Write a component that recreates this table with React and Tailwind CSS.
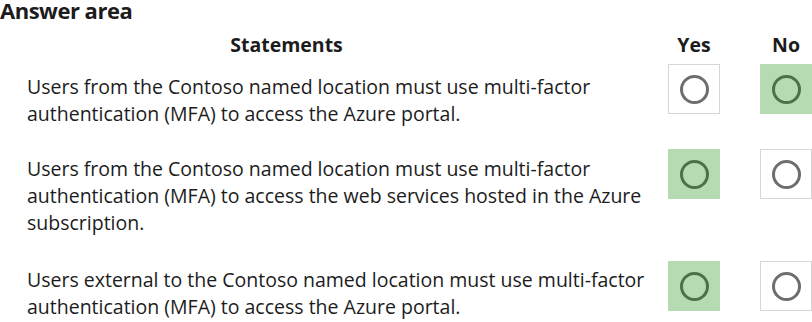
import React from "react";

function Box({ on }) {
  return (
    <div
      className={
        "w-[52px] h-[50px] border flex items-center justify-center shrink-0 " +
        (on ? "bg-[#b6dab1] border-[#b6dab1]" : "bg-white border-[#d6d6d6]")
      }
    >
      <div
        className={
          "w-[29px] h-[29px] rounded-full border-[3px] " +
          (on ? "border-[#4c6f4c]" : "border-[#6e6e6e]")
        }
      />
    </div>
  );
}

function Row({ lines, yes, no, textTop, className }) {
  return (
    <div className={"flex items-start " + className}>
      <div className={"w-[668px] shrink-0 pl-[27px] text-[19.5px] leading-[27px] text-[#1c1c1c] " + textTop}>
        {lines.map((l, i) => (
          <div key={i} className="whitespace-nowrap">{l}</div>
        ))}
      </div>
      <Box on={yes} />
      <div className="w-[40px] shrink-0" />
      <Box on={no} />
    </div>
  );
}

export default function App() {
  return (
    <div className="w-[812px] h-[322px] bg-white overflow-hidden font-['Open_Sans',sans-serif] text-[#1c1c1c] [font-variant-ligatures:none]">
      <div className="text-[22px] font-bold leading-[20px] tracking-[-0.5px]">Answer area</div>
      <div className="flex items-center h-[27px] mt-[11px] text-[19.5px] font-bold">
        <div className="w-[668px] shrink-0 pl-[27px] flex justify-center">
          <span className="ml-[-122px]">Statements</span>
        </div>
        <div className="w-[52px] text-center">Yes</div>
        <div className="w-[40px]" />
        <div className="w-[52px] text-center">No</div>
      </div>
      <Row
        className="mt-[6px]"
        textTop="mt-[9px]"
        lines={[
          "Users from the Contoso named location must use multi-factor",
          "authentication (MFA) to access the Azure portal.",
        ]}
        yes={false}
        no={true}
      />
      <Row
        className="mt-[22px]"
        textTop="mt-[6px]"
        lines={[
          "Users from the Contoso named location must use multi-factor",
          "authentication (MFA) to access the web services hosted in the Azure",
          "subscription.",
        ]}
        yes={true}
        no={false}
      />
      <Row
        className="mt-[25px]"
        textTop="mt-[5px]"
        lines={[
          "Users external to the Contoso named location must use multi-factor",
          "authentication (MFA) to access the Azure portal.",
        ]}
        yes={true}
        no={false}
      />
    </div>
  );
}
